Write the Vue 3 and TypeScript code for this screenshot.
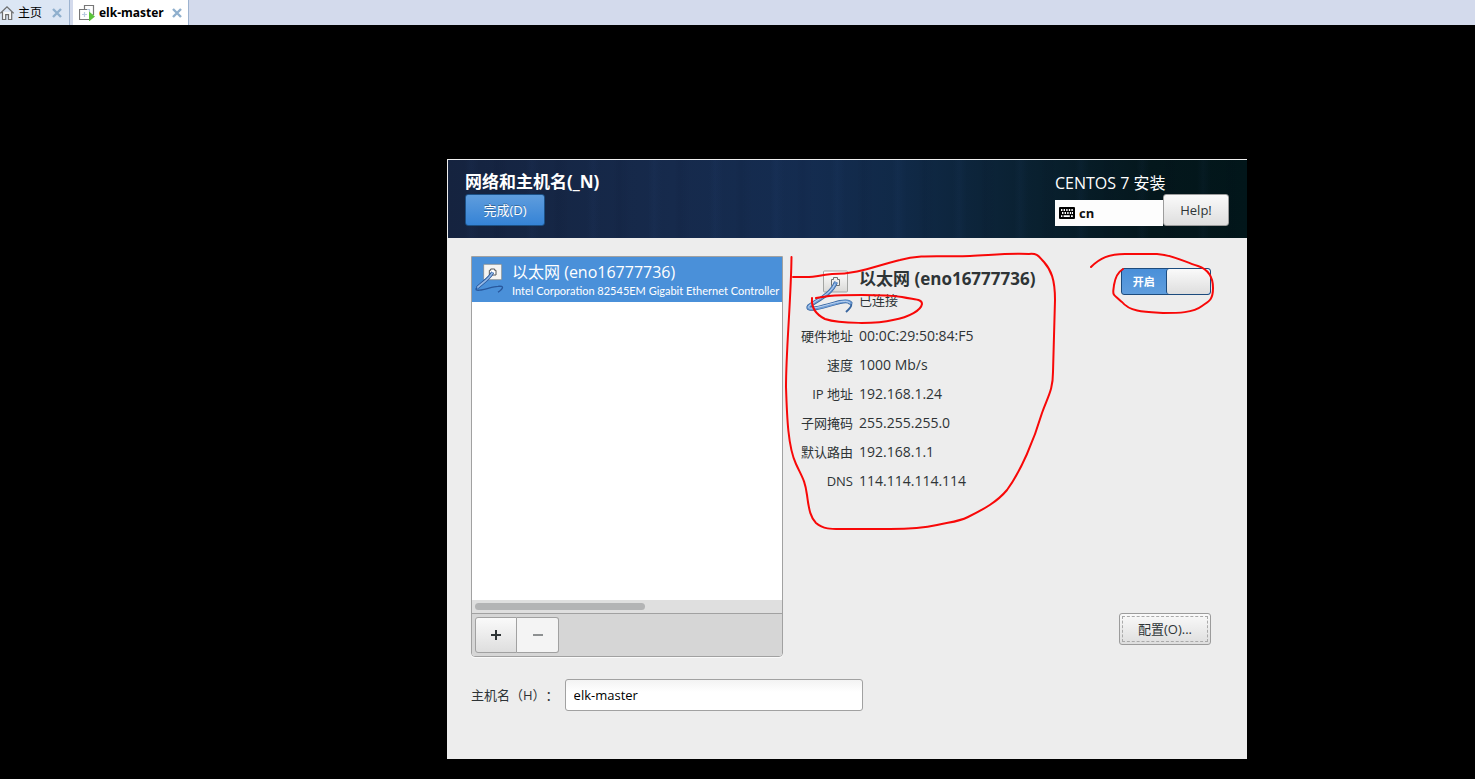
<script setup lang="ts">
import { ref } from 'vue'

interface DetailRow {
  label: string
  value: string
}

const details: DetailRow[] = [
  { label: '硬件地址', value: '00:0C:29:50:84:F5' },
  { label: '速度', value: '1000 Mb/s' },
  { label: 'IP 地址', value: '192.168.1.24' },
  { label: '子网掩码', value: '255.255.255.0' },
  { label: '默认路由', value: '192.168.1.1' },
  { label: 'DNS', value: '114.114.114.114' },
]

const hostname = ref<string>('elk-master')
const enabled = ref<boolean>(true)
</script>

<template>
  <div class="screen">
    <nav class="tabs">
      <div class="tab">
        <button type="button" class="tab-name">
          <svg class="home-icon" width="14" height="16" viewBox="0 0 14 16" fill="#f7f7f7" stroke="#6d6d6d" stroke-width="1.2">
            <path d="M2.5 7v7.500h3.200V9.600h2.800v4.900h3.200V7" />
            <path d="M.4 8.300 7 1.800l6.600 6.500" fill="none" />
          </svg>
          <span>主页</span>
        </button>
        <button type="button" class="tab-close" aria-label="×">
          <svg width="10" height="10" viewBox="0 0 10 10"><path d="M1 1l8 8M9 1L1 9" stroke="#8fafcd" stroke-width="2.4" /></svg>
        </button>
      </div>
      <div class="tab active">
        <button type="button" class="tab-name">
          <svg width="16" height="16" viewBox="0 0 16 16" fill="none" stroke="#777" stroke-width="1.2">
            <path d="M5.500 4.500v-4h9v9h-1" />
            <path d="M9.500 4.500h-9v10h10" />
            <path d="M3 9.500h5M5.500 7v5M8 4.500h2.500V7" stroke="#b9cbe0" />
            <path d="M10 6.500l6 5-6 5z" fill="#5cc43c" stroke="none" />
          </svg>
          <span>elk-master</span>
        </button>
        <button type="button" class="tab-close" aria-label="×">
          <svg width="10" height="10" viewBox="0 0 10 10"><path d="M1 1l8 8M9 1L1 9" stroke="#8fafcd" stroke-width="2.4" /></svg>
        </button>
      </div>
    </nav>

    <main class="console">
      <section class="installer">
        <header class="banner">
          <div class="banner-left">
            <h1>网络和主机名(_N)</h1>
            <button type="button" class="btn primary">完成(D)</button>
          </div>
          <div class="banner-right">
            <p class="product">CENTOS 7 安装</p>
            <div class="banner-tools">
              <button type="button" class="layout-indicator">
                <svg width="16" height="12" viewBox="0 0 16 12">
                  <rect width="16" height="12" rx="1" fill="#000" />
                  <g fill="#fff">
                    <path d="M2 2h1.400v2H2zM4.600 2H6v2H4.600zM7.200 2h1.400v2H7.200zM9.800 2h1.400v2H9.800zM12.400 2h1.400v2h-1.400z" />
                    <path d="M3 5h1.400v2H3zM5.600 5H7v2H5.600zM8.200 5h1.400v2H8.200zM10.800 5h1.400v2h-1.400zM13 5h1v2h-1z" />
                    <path d="M2 8.200h1.400v1.800H2zM4.600 8.200h6.200v1.800H4.600zM12 8.200h1.800v1.800H12z" />
                  </g>
                </svg>
                <span>cn</span>
              </button>
              <button type="button" class="btn help">Help!</button>
            </div>
          </div>
        </header>

        <div class="content">
          <div class="columns">
            <div class="devices">
              <ul class="device-list">
                <li>
                  <button type="button" class="device">
                    <svg class="device-icon" width="32" height="32" viewBox="0 0 48 48">
                      <rect x="14.500" y="2" width="27" height="23" rx="1" fill="#f5f4f2" stroke="#7c817f" />
                      <path d="M23 18v-7h2V9h6v2h2v7z" fill="#fff" stroke="#555" stroke-width="1.5" />
                      <path d="M28 14C22 23 6 32 3 39C3 45 27 35 36 35C46 34 44 38 36 44" fill="none" stroke="#28579c" stroke-width="2" />
                      <path d="M28 14C23 24 12 30 5 37" fill="none" stroke="#28579c" stroke-width="5" />
                      <path d="M28 14C23 24 12 30 5 37" fill="none" stroke="#93b8e6" stroke-width="2.5" />
                    </svg>
                    <span class="device-text">
                      <span class="device-name">以太网 (eno16777736)</span>
                      <span class="device-model">Intel Corporation 82545EM Gigabit Ethernet Controller</span>
                    </span>
                  </button>
                </li>
              </ul>
              <div class="scroll-track"><div class="scroll-thumb"></div></div>
              <div class="device-tools">
                <button type="button" class="tool add" aria-label="+">
                  <svg width="12" height="12" viewBox="0 0 12 12"><path d="M1 6h10M6 1v10" stroke="#2e3436" stroke-width="2" /></svg>
                </button>
                <button type="button" class="tool remove" aria-label="−" disabled>
                  <svg width="12" height="12" viewBox="0 0 12 12"><path d="M1 6h10" stroke="#8d9091" stroke-width="2" /></svg>
                </button>
              </div>
            </div>

            <div class="details">
              <div class="details-head">
                <svg class="cable-icon" width="48" height="48" viewBox="0 0 48 48">
                  <defs>
                    <linearGradient id="plate" x1="0" y1="0" x2="0" y2="1">
                      <stop offset="0" stop-color="#fff" />
                      <stop offset="1" stop-color="#d9d9d7" />
                    </linearGradient>
                  </defs>
                  <rect x="18.500" y="3" width="24" height="21" rx="1" fill="url(#plate)" stroke="#a3a5a3" />
                  <path d="M26.500 17.500v-6h2v-2h4v2h2v6z" fill="#eee" stroke="#6e7270" />
                  <path d="M31 14C26 27 12 32 4 38C-1 46 24 36 35 34C47 33 50 36 41 44" fill="none" stroke="#37659f" stroke-width="2" />
                  <path d="M31 14C26 27 12 32 4 38C-1 45 24 37 35 34C40 33 45 33 46 36" fill="none" stroke="#37659f" stroke-width="4" />
                  <path d="M31 14C26 27 12 32 4 38C-1 45 24 37 35 34C40 33 45 33 46 36" fill="none" stroke="#6f9dd6" stroke-width="2.5" />
                  <path d="M30 16C25 27 12 31 4 38C0 44 24 36 34 34C38 33 43 33 45 35" fill="none" stroke="#bdd4f0" />
                </svg>
                <div class="details-title">
                  <h2>以太网 (eno16777736)</h2>
                  <p>已连接</p>
                </div>
                <label class="switch">
                  <input v-model="enabled" type="checkbox" role="switch" />
                  <span class="switch-on">开启</span>
                  <span class="switch-knob"></span>
                </label>
              </div>
              <dl class="facts">
                <template v-for="row in details" :key="row.label">
                  <dt>{{ row.label }}</dt>
                  <dd>{{ row.value }}</dd>
                </template>
              </dl>
              <button type="button" class="btn configure">配置(O)...</button>
            </div>
          </div>

          <div class="hostname">
            <label for="hostname">主机名（H）：</label>
            <input id="hostname" v-model="hostname" type="text" />
          </div>
        </div>

        <svg class="marks" width="800" height="600" viewBox="447 159 800 600" aria-hidden="true">
          <path d="M791.500 257C791 300 786 350 786 387C787 418 788 447 796 464C802 477 805 480 807 495C809 511 811 518 816 523C824 530 833 529 847 529H890C907 529 924 528 937 525C950 522 958 522 968 517C984 509 997 502 1007 490C1021 471 1034 440 1042 413C1048 396 1053 390 1053 372L1055 300C1055 279 1051 270 1044 262C1039 257 1038 253 1029 254C1010 253 992 255 970 256C939 257 921 254 900 260C875 266 858 274 832 274C820 275 815 277 809 277H793" />
          <path d="M812 298C811 309 817 315 825 319C840 324 877 324 893 320C910 317 921 310 922 304C922 299 916 300 902 297C883 294 839 295 829 296L816 298" />
          <path d="M1091 267C1100 258 1109 254 1125 254H1157C1174 255 1184 262 1198 266C1207 269 1213 276 1213 288C1213 300 1209 301 1202 306C1193 313 1178 313 1163 313C1145 312 1130 312 1122 302C1111 293 1113 295 1114 285C1115 279 1118 272 1123 269" />
        </svg>
      </section>
    </main>
  </div>
</template>

<style>
html,
body {
  margin: 0;
  background: #000;
}
</style>

<style scoped>
* {
  box-sizing: border-box;
}

.screen {
  min-height: 100vh;
  display: flex;
  flex-direction: column;
  background: #000;
  color: #2e3436;
  font: 13px/20px "Open Sans", "Noto Sans CJK SC", sans-serif;
}

h1,
h2,
p,
ul,
dl,
dd {
  margin: 0;
  padding: 0;
}

button {
  margin: 0;
  padding: 0;
  border: 0;
  background: none;
  color: inherit;
  font: inherit;
}

svg {
  display: block;
  flex: none;
}

.tabs {
  display: flex;
  gap: 3px;
  height: 25px;
  background: #d3daec;
}

.tab {
  display: flex;
  align-items: center;
  gap: 10px;
  padding-right: 7px;
  border-right: 1px solid #9db3d0;
  background: #dce6f4;
  color: #000;
  font-size: 12px;
}

.tab.active {
  gap: 8px;
  padding: 0 6px;
  background: #fff;
  font-weight: 700;
}

.tab-name {
  display: flex;
  align-items: center;
  gap: 4px;
}

.console {
  flex: 1;
  display: flex;
  padding: 134px 228px 20px 447px;
}

.installer {
  position: relative;
  flex: 1;
  min-width: 720px;
  display: flex;
  flex-direction: column;
  border-top: 1px solid #eee;
  background: #ededed;
}

.banner {
  display: flex;
  justify-content: space-between;
  height: 78px;
  padding: 12px 18px 0 17px;
  border-left: 1px solid #eee;
  color: #fff;
  background:
    repeating-linear-gradient(90deg, transparent 0 17px, rgba(60, 100, 170, 0.05) 23px, transparent 31px 43px, rgba(0, 0, 20, 0.05) 49px, transparent 61px),
    linear-gradient(90deg, #15233f 0%, #162a4c 28%, #142c50 45%, #102947 57%, #09202f 74%, #04171c 88%, #02161a 100%);
}

.banner h1 {
  margin-bottom: 2px;
  font-size: 17px;
  line-height: 20px;
  font-weight: 700;
}

.btn {
  height: 32px;
  border: 1px solid #9c9c9c;
  border-radius: 3px;
  background: linear-gradient(#fafafa, #dedede);
  color: #2e3436;
}

.btn.primary {
  width: 80px;
  border-color: #1c5187;
  background: linear-gradient(#5f9ddd, #3583d6);
  color: #fff;
  text-shadow: 0 -1px rgba(0, 0, 0, 0.3);
}

.banner-right {
  width: 174px;
}

.product {
  padding-top: 1px;
  margin-bottom: 1px;
  font-size: 16px;
  line-height: 20px;
}

.banner-tools {
  display: flex;
  align-items: flex-end;
}

.layout-indicator {
  flex: 1;
  display: flex;
  align-items: center;
  gap: 4px;
  height: 26px;
  padding: 0 4px;
  background: #fdfdfd;
  color: #111;
  font-weight: 700;
}

.btn.help {
  width: 66px;
}

.content {
  flex: 1;
  display: flex;
  flex-direction: column;
  gap: 22px;
  padding: 18px 36px 48px 24px;
}

.columns {
  flex: 1;
  display: grid;
  grid-template-columns: 312px 1fr;
}

.devices {
  display: flex;
  flex-direction: column;
  border: 1px solid #a1a1a1;
  border-radius: 0 0 4px 4px;
  background: #fff;
  overflow: hidden;
  box-shadow: 0 1px #fafafa;
}

.device-list {
  flex: 1;
  list-style: none;
}

.device {
  display: flex;
  align-items: center;
  gap: 6px;
  width: 100%;
  height: 45px;
  padding-left: 2px;
  background: #4a90d9;
  color: #fff;
  text-align: left;
}

.device-icon {
  margin-bottom: 2px;
}

.device-text {
  display: flex;
  flex-direction: column;
  padding-top: 2px;
  white-space: nowrap;
}

.device-name {
  font-size: 16px;
  line-height: 20px;
}

.device-model {
  font-family: Lato, "Noto Sans CJK SC", sans-serif;
  font-size: 11px;
  line-height: 18px;
}

.scroll-track {
  height: 13px;
  padding: 3px;
  background: #dfdfdf;
}

.scroll-thumb {
  width: 56%;
  height: 7px;
  border-radius: 4px;
  background: #b3b4b5;
}

.device-tools {
  display: flex;
  height: 43px;
  padding: 3px;
  border-top: 1px solid #a1a1a1;
  background: #d6d6d6;
}

.tool {
  display: flex;
  align-items: center;
  justify-content: center;
  width: 42px;
  height: 36px;
  border: 1px solid #a1a1a1;
  background: linear-gradient(#fafafa, #dedede);
}

.tool.add {
  border-radius: 3px 0 0 3px;
}

.tool.remove {
  border-left: 0;
  border-radius: 0 3px 3px 0;
  background: #f4f4f4;
}

.details {
  display: flex;
  flex-direction: column;
  padding: 12px 0;
}

.details-head {
  display: flex;
  align-items: flex-start;
  gap: 6px;
  padding-left: 22px;
}

.details-title {
  flex: 1;
}

.details-title h2 {
  font-size: 17px;
  line-height: 22px;
  font-weight: 700;
}

.details-title p {
  line-height: 20px;
}

.switch {
  display: flex;
  width: 90px;
  height: 27px;
  border: 1px solid #1c4b7d;
  border-radius: 3px;
  background: linear-gradient(#4a90d9, #5f9ddd);
  overflow: hidden;
}

.switch input {
  appearance: none;
  width: 0;
  height: 0;
  margin: 0;
}

.switch-on {
  flex: 1;
  color: #fff;
  font-size: 11px;
  line-height: 25px;
  font-weight: 700;
  text-align: center;
}

.switch-knob {
  flex: 1;
  border-left: 1px solid #1c4b7d;
  border-radius: 3px;
  background: linear-gradient(#fafafa, #dedede);
}

.facts {
  flex: 1;
  display: grid;
  grid-template-columns: 70px 1fr;
  column-gap: 6px;
  row-gap: 9px;
  align-content: start;
  padding-top: 10px;
}

.facts dt {
  text-align: right;
}

.facts dd {
  font-size: 14px;
}

.btn.configure {
  align-self: flex-end;
  width: 92px;
  outline: 1px dashed #aaa;
  outline-offset: -4px;
}

.hostname {
  display: flex;
  align-items: center;
  gap: 6px;
}

.hostname label {
  text-spacing-trim: space-all;
}

.hostname input {
  width: 298px;
  height: 32px;
  padding: 0 8px;
  border: 1px solid #a1a1a1;
  border-radius: 3px;
  background: linear-gradient(#f3f3f3, #fff 12px);
  color: #000;
  font: inherit;
}

.marks {
  position: absolute;
  top: -1px;
  left: 0;
  fill: none;
  stroke: #f80808;
  stroke-width: 2;
  stroke-linecap: round;
  stroke-linejoin: round;
  pointer-events: none;
}
</style>
